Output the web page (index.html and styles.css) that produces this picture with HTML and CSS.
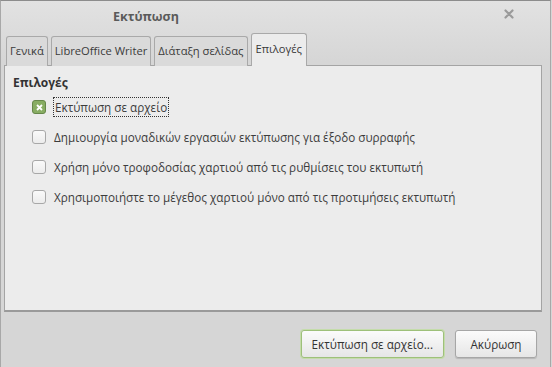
FILE: index.html
```html
<!DOCTYPE html>
<html lang="el">
<head>
    <meta charset="UTF-8">
    <title>Εκτύπωση</title>
    <link rel="stylesheet" href="styles.css">
</head>
<body>
    <div class="window">
        <div class="titlebar">
            <span class="title">Εκτύπωση</span>
            <span class="close">
                <svg width="10" height="10" viewBox="0 0 10 10"><path d="M1.5 1.5 L8.5 8.5 M8.5 1.5 L1.5 8.5" stroke="#9a9a9a" stroke-width="2.2" stroke-linecap="round"/></svg>
            </span>
        </div>

        <div class="tabs">
            <div class="tab">Γενικά</div>
            <div class="tab">LibreOffice Writer</div>
            <div class="tab">Διάταξη σελίδας</div>
            <div class="tab active">Επιλογές</div>
        </div>

        <div class="panel">
            <div class="section-title">Επιλογές</div>
            <div class="options">
                <div class="option">
                    <span class="check checked">
                        <svg width="7" height="7" viewBox="0 0 7 7"><path d="M1 1 L6 6 M6 1 L1 6" stroke="#fff" stroke-width="1.8"/></svg>
                    </span>
                    <span class="label focused">Εκτύπωση σε αρχείο</span>
                </div>
                <div class="option">
                    <span class="check"></span>
                    <span class="label">Δημιουργία μοναδικών εργασιών εκτύπωσης για έξοδο συρραφής</span>
                </div>
                <div class="option">
                    <span class="check"></span>
                    <span class="label">Χρήση μόνο τροφοδοσίας χαρτιού από τις ρυθμίσεις του εκτυπωτή</span>
                </div>
                <div class="option">
                    <span class="check"></span>
                    <span class="label">Χρησιμοποιήστε το μέγεθος χαρτιού μόνο από τις προτιμήσεις εκτυπωτή</span>
                </div>
            </div>
        </div>

        <div class="footer">
            <button class="btn default">Εκτύπωση σε αρχείο...</button>
            <button class="btn">Ακύρωση</button>
        </div>
    </div>
</body>
</html>
```

FILE: styles.css
```css
body {
    margin: 0;
    background-color: #d6d6d6;
    font-family: 'Open Sans', 'Noto Sans', sans-serif;
    font-size: 11.7px;
    color: #3c3c3c;
}
.window {
    width: 549px;
    height: 366px;
    border-top: 1px solid #8c8c8c;
    border-left: 1px solid #a8a8a8;
    border-right: 1px solid #a8a8a8;
    background: linear-gradient(#e2e2e2, #d6d6d6 60px);
    display: flex;
    flex-direction: column;
}

/* titulek okna */
.titlebar {
    height: 30px;
    display: flex;
    align-items: center;
    justify-content: space-between;
    padding: 0 36px 0 112px;
}
.title {
    font-weight: bold;
    font-size: 12.5px;
    color: #5a5a5a;
}
.close {
    display: flex;
    margin-top: -4px;
}

/* záložky */
.tabs {
    display: flex;
    align-items: flex-end;
    gap: 3px;
    padding-left: 5px;
    height: 35px;
    margin-bottom: -1px;
    position: relative;
    z-index: 1;
}
.tab {
    height: 30px;
    line-height: 28px;
    padding: 0 3px;
    font-size: 11.2px;
    border: 1px solid #a9a9a9;
    border-bottom: none;
    border-radius: 3px 3px 0 0;
    background-color: #dadada;
    color: #3a3a3a;
    box-sizing: border-box;
}
.tab.active {
    height: 33px;
    line-height: 30px;
    background-color: #ececec;
    padding: 0 4px;
}

/* panel */
.panel {
    margin: 0 8px 0 3px;
    height: 247px;
    border: 1px solid #a4a4a4;
    border-bottom: 2px solid #9a9a9a;
    background-color: #ececec;
    box-sizing: border-box;
    padding: 8px 8px;
}
.section-title {
    font-weight: bold;
    font-size: 12px;
    color: #333;
    margin-bottom: 6px;
}
.options {
    display: flex;
    flex-direction: column;
    gap: 10px;
    padding-left: 19px;
}
.option {
    display: flex;
    align-items: center;
    gap: 8px;
    height: 20px;
}
.check {
    width: 12px;
    height: 12px;
    border: 1px solid #a8a8a8;
    border-radius: 3px;
    background: linear-gradient(#fafafa, #ececec);
    display: flex;
    align-items: center;
    justify-content: center;
}
.check.checked {
    background: #88ad63;
    border-color: #66874a;
}
.label.focused {
    outline: 1px dotted #333;
    outline-offset: 0;
    padding: 1px 1px;
}

/* tlačítka */
.footer {
    display: flex;
    justify-content: flex-end;
    gap: 11px;
    padding: 18px 13px 0 0;
}
.btn {
    font-family: inherit;
    font-size: 11.7px;
    color: #333;
    height: 28px;
    min-width: 82px;
    padding: 0 10px;
    border: 1px solid #a6a6a6;
    border-radius: 3px;
    background: linear-gradient(#fbfbfb, #e6e6e6);
    box-shadow: 0 1px 1px rgba(0, 0, 0, 0.15);
}
.btn.default {
    border-color: #9ec07a;
    box-shadow: 0 0 0 1px #c4dcaa;
}
```
